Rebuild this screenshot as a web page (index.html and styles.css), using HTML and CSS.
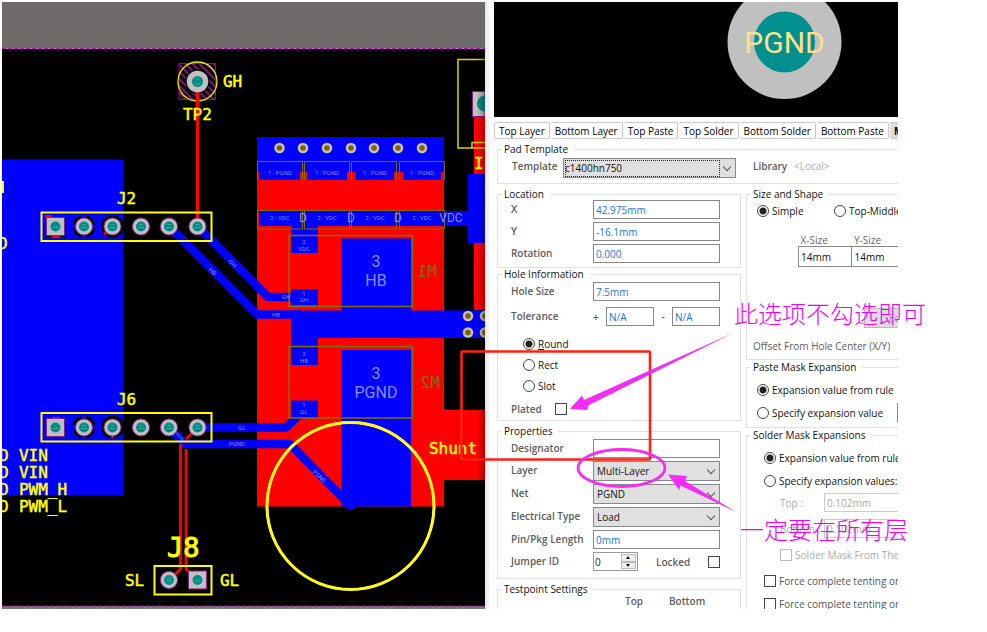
FILE: index.html
```html
<!DOCTYPE html>
<html lang="zh-CN">
<head>
<meta charset="utf-8">
<title>Pad properties</title>
<link rel="stylesheet" href="styles.css">
</head>
<body>
<main class="stage">
  <svg class="board" viewBox="2 2 483 607" role="img" aria-label="PCB layout">
    <defs>
      <g id="via"><circle r="5.3" fill="#c4c4b4"/><circle r="2.8" fill="#806000"/></g>
      <g id="pad"><circle r="8.6" fill="#c0c0c0" stroke="#8a1c8a"/><circle r="5" fill="#008c8c"/><path d="M-2 -2h4M-3 1h6" stroke="#4aa78c" stroke-width="1"/></g>
      <g id="sqpad"><path d="M-9-9H9V9H-9Z" fill="#c0c0c0" stroke="#8a1c8a"/><circle r="5" fill="#008c8c"/><path d="M-3 1h6" stroke="#4aa78c"/></g>
      <pattern id="hatch" width="5" height="5" patternUnits="userSpaceOnUse" patternTransform="rotate(-45)"><path d="M1 0V5" stroke="#b01cb0" stroke-width="1.400"/></pattern>
      <linearGradient id="shade"><stop offset="0" stop-color="#000" stop-opacity="0"/><stop offset="1" stop-color="#000" stop-opacity=".3"/></linearGradient>
    </defs>
    <path d="M2 2H485V609H2Z"/>
    <path d="M2 2H485V48H2Z" fill="#6e6a69"/>
    <path d="M2 48.5H485" stroke="#a0a0a0"/>
    <path d="M2 48.5H485" stroke="#d000d0" stroke-dasharray="4 2"/>
    <path d="M2 607.5H485" stroke="#777" stroke-width="3"/>
    <path d="M2 606H485" stroke="#b000b0" stroke-dasharray="4 2"/>
    <path d="M2 159.500H123V495H2Z" fill="#00f"/>

    <path d="M257 161H444V410H485V480H444V506.500H257ZM474 116H485V310H474Z" fill="#f00"/>
    <g fill="#00f">
      <path d="M257 137H444V172H257Z"/>
      <path d="M259 172H300V180H259ZM307 172H347V180H307ZM355 172H394V180H355ZM403 172H441V180H403Z"/>
      <path d="M259 211H469V226H259ZM468 174H485V243H468ZM291 226H318V253H291Z"/>
      <path d="M341.500 238.500H411V311H341.500ZM291 289H318V305H291ZM291 310.500H485V338H318V365H291ZM341.500 350H411V506.500H341.500ZM291 400.500H318V417H291Z"/>
    </g>
    <g fill="none" stroke="#00f" stroke-width="8.500" stroke-linejoin="round" stroke-linecap="round">
      <path d="M169 226.500L257 314.500H300M198 226.500L268 297H294M198 427.500H286L299 415M169 427L185 444H290L351 506"/>
    </g>
    <g fill="none" stroke="#806f00">
      <path d="M257.500 180V161.500H302.500V180M304.500 180V161.500H349.500V180M351.500 180V161.500H396.500V180M399.500 180V161.500H444.500V180"/>
      <path d="M257.500 210.500H302.500V229H257.500ZM304.500 210.500H349.500V229H304.500ZM351.500 210.500H396.500V229H351.500ZM399.500 210.500H444.500V229H399.500Z"/>
      <path d="M289 235.500H412.500V306.500H289ZM289 346.500H412.500V418H289Z" stroke-width="1.500"/>
    </g>
    <g class="net tiny">
      <text x="280" y="175">1 : PGND</text><text x="327" y="175">1 : PGND</text><text x="375" y="175">1 : PGND</text><text x="422" y="175">1 : PGND</text>
      <text x="280" y="220">2 : VDC</text><text x="327" y="220">2 : VDC</text><text x="375" y="220">2 : VDC</text><text x="422" y="220">2 : VDC</text>
      <text x="304" y="244">2</text><text x="304" y="251">VDC</text>
      <text x="304" y="296">1</text><text x="304" y="302">GH</text>
      <text x="304" y="356">2</text><text x="304" y="363">HB</text>
      <text x="304" y="407">1</text><text x="304" y="414">GL</text>
      <text x="286" y="299">GH</text><text x="276" y="317">HB</text><text x="242" y="430">GL</text><text x="237" y="446">PGND</text>
      <text transform="translate(318 478) rotate(45)">PGND</text><text transform="translate(211 273) rotate(45)">HB</text><text transform="translate(231 265) rotate(45)">GH</text>
    </g>
    <g class="net mid"><text x="303" y="222">D</text><text x="351" y="222">D</text><text x="398" y="222">D</text><text x="451" y="222">VDC</text></g>
    <g class="net big"><text x="376" y="267">3</text><text x="376" y="286">HB</text><text x="376" y="379">3</text><text x="376" y="398">PGND</text></g>
    <g class="mirror"><text transform="translate(437 277) scale(-1 1)">M1</text><text transform="translate(440 388) scale(-1 1)">M2</text></g>
    <g>
      <use href="#via" x="279.500" y="148"/><use href="#via" x="303" y="148"/><use href="#via" x="327" y="148"/><use href="#via" x="351" y="148"/><use href="#via" x="374" y="148"/><use href="#via" x="398" y="148"/><use href="#via" x="422" y="148"/>
      <use href="#via" x="468" y="316"/><use href="#via" x="485" y="316"/><use href="#via" x="468" y="332.500"/><use href="#via" x="485" y="332.500"/>
    </g>

    <g fill="none" stroke="#f00" stroke-width="3">
      <path d="M180.500 443V569L169 580M198 427L186 439M186 449V569L197 580" stroke-width="2.800"/>
    </g>
    <path d="M169 427L183 442" stroke="#00f" stroke-width="8"/>
    <path d="M174 430L183 440" stroke="#5c5cff" stroke-width="3" stroke-dasharray="1 1"/>
    <path d="M179 63.500H215.500V99.500H179Z" fill="url(#hatch)" stroke="#a000a0"/>
    <circle cx="197.500" cy="81.500" r="12" fill="#000"/>
    <circle cx="197.500" cy="81.500" r="19.500" fill="none" stroke="#e8e800" stroke-width="1.300"/>
    <path d="M197.500 82V220" stroke="#f00" stroke-width="3.500"/>
    <circle cx="197.500" cy="81.500" r="10.800" fill="#c0c0c0"/><circle cx="197.500" cy="81.500" r="5.500" fill="#008c8c"/><path d="M195.500 79h4M195 84h5" stroke="#4aa78c"/>

    <g>
      <path d="M46 217H66V237H46ZM46 417H66V437H46Z"/>
      <path d="M44 215H51L54 220L48 223ZM52 235H60V238H52ZM52 417H60V420H52Z" fill="#f00"/>
      <circle cx="84" cy="226.500" r="11.500"/><circle cx="112.500" cy="226.500" r="11.500"/>
      <circle cx="84" cy="427" r="11.500"/><circle cx="112.500" cy="427" r="11.500"/>
      <path d="M84 214V239M72 226.500H96M84 415V439M72 427H96" stroke="#00f" stroke-width="4"/>
      <path d="M104 234L108 231M112.500 435V438" stroke="#f00" stroke-width="3"/>
      <use href="#sqpad" x="55.500" y="226.500"/><use href="#pad" x="84" y="226.500"/><use href="#pad" x="112.500" y="226.500"/><use href="#pad" x="141" y="226.500"/><use href="#pad" x="169" y="226.500"/><use href="#pad" x="197.500" y="226.500"/>
      <use href="#sqpad" x="55.500" y="427.500"/><use href="#pad" x="84" y="427.500"/><use href="#pad" x="112.500" y="427.500"/><use href="#pad" x="141" y="427.500"/><use href="#pad" x="169" y="427.500"/><use href="#pad" x="197.500" y="427.500"/>
      <use href="#pad" x="169" y="580"/><use href="#sqpad" x="197.500" y="580"/>
    </g>
    <g fill="none" stroke="#ff0" stroke-width="2">
      <path d="M41.500 212.500H211.500V241H41.500ZM41.500 413H211.500V441.500H41.500ZM154.500 566H211.500V594.500H154.500Z"/>
      <path d="M486 59.500H458V148H486M472 148V142.500H486" stroke-width="1.500" stroke="#d8d800"/>
      <circle cx="350.500" cy="506" r="83.500" stroke="#fff080" stroke-width="3"/>
      <circle cx="350.500" cy="506" r="83.500" stroke-width="2.300"/>
    </g>
    <path d="M472.500 91.500H485V116.500H472.500Z" fill="#c0c0c0" stroke="#8a1c8a"/><circle cx="485" cy="103.500" r="8" fill="#008c8c"/>
    <g class="silk">
      <text x="223" y="87">GH</text><text x="183" y="120">TP2</text><text x="117" y="204">J2</text><text x="117" y="405">J6</text>
      <text x="19" y="461">VIN</text><text x="19" y="478">VIN</text><text x="19" y="495">PWM_H</text><text x="19" y="512">PWM_L</text>
      <text x="-1" y="461">D</text><text x="-1" y="478">D</text><text x="-1" y="495">D</text><text x="-1" y="512">D</text><text x="-2" y="249">D</text>
      <path d="M2 181H4V193H2Z"/>
      <text x="125" y="586">SL</text><text x="220" y="586">GL</text><text x="429" y="454">Shunt</text><text x="474" y="169">I</text>
      <text class="silk-large" x="167" y="557">J8</text>
    </g>
    <path d="M477 49H485V606H477Z" fill="url(#shade)"/>
  </svg>

  <section class="panel" aria-label="Pad">
    <svg class="preview" viewBox="494 2 404 115" preserveAspectRatio="xMidYMid slice" role="img" aria-label="Pad preview">
      <circle cx="784.500" cy="42" r="57" fill="#c0c0c0"/><circle cx="784.500" cy="42" r="30.500" fill="#009090"/>
      <text x="784.500" y="53" text-anchor="middle">PGND</text>
    </svg>
    <nav class="tabs">
      <button type="button">Top Layer</button><button type="button">Bottom Layer</button><button type="button">Top Paste</button><button type="button">Top Solder</button><button type="button">Bottom Solder</button><button type="button">Bottom Paste</button><button type="button" class="active">Multi-Layer</button>
    </nav>
    <form class="form">
      <fieldset class="group template open">
        <legend>Pad Template</legend>
        <label for="tpl">Template</label>
        <span class="select focus"><select id="tpl"><option>c1400hn750</option></select></span>
        <span class="library">Library</span><span class="faint">&lt;Local&gt;</span>
      </fieldset>
      <div class="columns">
        <div class="column">
          <fieldset class="group location">
            <legend>Location</legend>
            <div class="row"><label for="px">X</label><input id="px" value="42.975mm"></div>
            <div class="row"><label for="py">Y</label><input id="py" value="-16.1mm"></div>
            <div class="row"><label for="rot">Rotation</label><input id="rot" value="0.000"></div>
          </fieldset>
          <fieldset class="group hole">
            <legend>Hole Information</legend>
            <div class="row"><label for="hs">Hole Size</label><input id="hs" value="7.5mm"></div>
            <div class="row"><label for="tp">Tolerance</label><div class="pair"><span>+</span><input id="tp" value="N/A"><span>-</span><input aria-label="Minus tolerance" value="N/A"></div></div>
            <div class="radios">
              <label><input type="radio" name="shape" checked><span><u>R</u>ound</span></label>
              <label><input type="radio" name="shape"><span>Rect</span></label>
              <label><input type="radio" name="shape"><span>Slot</span></label>
            </div>
            <div class="plated"><label for="plated">Plated</label><input type="checkbox" id="plated"></div>
          </fieldset>
          <fieldset class="group properties">
            <legend>Properties</legend>
            <div class="row"><label for="des">Designator</label><input id="des" value=""></div>
            <div class="row"><label for="lay">Layer</label><span class="select"><select id="lay"><option>Multi-Layer</option></select></span></div>
            <div class="row"><label for="net">Net</label><span class="select"><select id="net"><option>PGND</option></select></span></div>
            <div class="row"><label for="et">Electrical Type</label><span class="select"><select id="et"><option>Load</option></select></span></div>
            <div class="row"><label for="len">Pin/Pkg Length</label><input id="len" value="0mm"></div>
            <div class="row"><label for="jid">Jumper ID</label>
              <div class="jumper">
                <span class="spinner"><input id="jid" value="0"><span class="steps"><button type="button" aria-label="Increase"></button><button type="button" class="down" aria-label="Decrease"></button></span></span>
                <label for="lock">Locked</label><input type="checkbox" id="lock">
              </div>
            </div>
          </fieldset>
          <fieldset class="group testpoint">
            <legend>Testpoint Settings</legend>
            <div class="heads"><span>Top</span><span>Bottom</span></div>
          </fieldset>
        </div>
        <div class="column">
          <fieldset class="group open size">
            <legend>Size and Shape</legend>
            <div class="modes">
              <label><input type="radio" name="mode" checked><span>Simple</span></label>
              <label><input type="radio" name="mode"><span>Top-Middle-Bottom</span></label>
            </div>
            <table class="sizes">
              <thead><tr><th>X-Size</th><th>Y-Size</th></tr></thead>
              <tbody><tr><td>14mm</td><td>14mm</td></tr></tbody>
            </table>
            <button type="button" class="edit" disabled>Edit</button>
            <p class="offset">Offset From Hole Center (X/Y)</p>
          </fieldset>
          <fieldset class="group open paste">
            <legend>Paste Mask Expansion</legend>
            <label><input type="radio" name="paste" checked><span>Expansion value from rule</span></label>
            <div class="specify"><label><input type="radio" name="paste"><span>Specify expansion value</span></label><input class="amount" aria-label="Paste expansion"></div>
          </fieldset>
          <fieldset class="group open solder">
            <legend>Solder Mask Expansions</legend>
            <label><input type="radio" name="solder" checked><span>Expansion value from rule</span></label>
            <label><input type="radio" name="solder"><span>Specify expansion values:</span></label>
            <div class="value"><label for="st">Top :</label><input id="st" value="0.102mm" disabled></div>
            <div class="value"><label for="sb">Bottom :</label><input id="sb" value="0.102mm" disabled></div>
            <label class="from-hole"><input type="checkbox" disabled><span>Solder Mask From The Hole Edge</span></label>
            <label class="tent"><input type="checkbox"><span>Force complete tenting on top</span></label>
            <label class="tent"><input type="checkbox"><span>Force complete tenting on bottom</span></label>
          </fieldset>
        </div>
      </div>
    </form>
  </section>

  <svg class="notes" viewBox="0 0 987 632">
    <rect x="461.500" y="351.500" width="188.500" height="108" rx="1" fill="none" stroke="#ff2010" stroke-width="2.600"/>
    <path d="M570 409L582 395.500L584 400L733 333L588 405.500L587.500 410ZM668 474.500L687 476L685 481L736 512L680.500 485.500L679 490Z" fill="#f52cf5"/>
    <ellipse cx="621.500" cy="468" rx="43.500" ry="18.500" fill="none" stroke="#f52cf5" stroke-width="2.800"/>
    <text x="734" y="323">此选项不勾选即可</text>
    <text x="740" y="539">一定要在所有层</text>
  </svg>
</main>
</body>
</html>
```
FILE: styles.css
```css
* { box-sizing: border-box; }
body { margin: 0; background: #fff; font: 500 10px/12px "Open Sans", "Noto Sans", sans-serif; color: #111; }
.stage { position: relative; display: grid; grid-template-columns: minmax(0, 483fr) minmax(0, 413fr); padding: 2px 9.02% 0 2px; }
.board { display: block; width: 100%; height: auto; }
.board text { font-family: Roboto, sans-serif; font-weight: 400; }
.net { fill: #8c8cff; text-anchor: middle; }
.tiny { font-size: 6px; }
.mid { font-size: 12px; }
.big { font-size: 16px; }
.board .silk text { font-family: "DejaVu Sans Mono", monospace; font-size: 16px; stroke: #ff0; stroke-width: 0.5px; }
.board .silk .silk-large { font-size: 27px; stroke-width: 1px; }
.silk { fill: #ff0; }
.mirror { fill: #80700c; font-size: 16px; }
.board .mirror text { font-family: "DejaVu Sans Mono", monospace; }
.notes { position: absolute; top: 0; left: 0; width: 100%; pointer-events: none; }
.notes text { font: 300 24px "Noto Sans CJK SC", sans-serif; fill: #f500f5; }

.panel { height: 0; min-height: 100%; overflow: hidden; padding-left: 9px; background: linear-gradient(90deg, #e4e4e4, #f0f0f0 2px, #f0f0f0 4px, #fff 4px); }
.preview { display: block; width: 100%; height: 115px; background: #000; }
.preview text { font: 400 30px Roboto, sans-serif; fill: #ffe08a; }
.tabs { display: flex; gap: 1px; margin-top: 5px; white-space: nowrap; }
.tabs button { flex: none; height: 17px; padding: 0 4px; border: 1px solid #c8c8c8; border-left-width: 0; border-radius: 2px; background: #fff; font: inherit; color: #000; }
.tabs button:first-child { border-left-width: 1px; }
.tabs .active { background: #ddd; font-weight: 700; }

.form { margin: 4px 0 0 3px; white-space: nowrap; }
.group { min-width: 0; margin: 0; padding: 0 20px 4px 13px; border: 1px solid #e0e0e0; }
.open { padding-left: 6px; padding-right: 0; border-right: 0; }
.group legend { margin-left: -10px; padding: 0 6px 0 3px; line-height: 12px; }
.group.open > legend { margin-left: -3px; }
label, .library, .pair, .heads, .offset { color: #5c5c5c; font-weight: 600; }
input, select { width: 100%; min-width: 0; margin: 0; border: 1px solid #888; border-radius: 0; font: inherit; font-weight: 500; }
input { height: 19px; padding: 0 2px; background: #fff; color: #1a73d9; }
.select { position: relative; display: block; }
.select::after { content: ""; position: absolute; right: 6px; top: 6px; width: 5px; height: 5px; border: solid #555; border-width: 0 1px 1px 0; transform: rotate(45deg); }
select { display: block; height: 20px; padding: 0 3px; appearance: none; background: #e0e0e0; color: #111; }
input[type="radio"], input[type="checkbox"] { flex: none; appearance: none; width: 12px; height: 12px; padding: 0; border: 1px solid #444; }
input[type="radio"] { border-radius: 50%; }
input[type="radio"]:checked { background: radial-gradient(circle, #222 3px, #fff 4px); }

.template { display: flex; height: 41px; padding: 3px 0 4px 14px; }
.group.template > legend { margin-left: -11px; }
.template label { width: 51px; padding-top: 2px; }
.template .select { width: 173px; margin-right: 17px; }
.template select { padding: 0 1px; }
.focus::before { content: ""; position: absolute; inset: 2px 16px 2px 2px; border: 1px dotted #222; }
.library { width: 41px; padding-top: 2px; }
.faint { color: #aaa; padding-top: 2px; }
.columns { display: grid; grid-template-columns: 244px minmax(0, 1fr); column-gap: 5px; margin-top: 4px; }
.row { display: grid; grid-template-columns: 82px minmax(0, 1fr); align-items: center; }
.row > label { padding-bottom: 2px; }
.location .row + .row, .properties .row + .row { margin-top: 3px; }
.hole { padding-top: 2px; padding-bottom: 2px; }
.hole .row + .row { margin-top: 6px; }
.pair { display: grid; grid-template-columns: 13px 1fr 18px 1fr; align-items: center; }
.pair input + span { text-align: center; }
.radios { display: grid; grid-auto-rows: 21px; margin-top: 7px; padding-left: 12px; }
.radios label, .modes label, .paste label, .solder > label { display: flex; align-items: center; gap: 3px; color: #111; font-weight: 500; }
.plated { display: flex; align-items: center; height: 22px; padding-top: 4px; }
.plated label { width: 44px; }
.properties { margin-top: 4px; padding-top: 2px; padding-bottom: 7px; }
.jumper { display: flex; align-items: center; }
.jumper label { margin: 0 auto 0 18px; }
.spinner { display: flex; width: 45px; border: 1px solid #999; padding: 1px; height: 19px; }
.spinner input { flex: 1; height: 15px; padding: 0; border: 0; color: #222; }
.steps { display: grid; width: 15px; }
.steps button { display: grid; place-items: center; padding: 0; border: 1px solid #bbb; background: #eee; }
.steps button::before { content: ""; border: 2px solid transparent; border-top-width: 0; border-bottom: 3px solid #111; }
.steps .down::before { transform: rotate(180deg); }
.testpoint { margin-top: 4px; height: 80px; }
.heads { display: flex; gap: 26px; padding-left: 114px; }

.size { height: 172px; }
.modes { display: grid; grid-template-columns: 77px 1fr; height: 22px; padding-left: 4px; }
.sizes { width: 108px; margin: 12px 0 0 45px; border-collapse: collapse; table-layout: fixed; }
.sizes th { padding: 0 2px; text-align: left; color: #666; font-weight: 500; }
.sizes td { height: 20px; padding: 0 2px; border: 1px solid #888; font-weight: 500; }
.edit { display: block; width: 80px; height: 20px; margin: 41px 0 0 111px; padding: 0 24px; border: 1px solid #bbb; background: #ddd; color: #999; font: inherit; text-align: left; }
.offset { margin: 12px 0 0; font-weight: 500; }
.paste { height: 67px; margin-top: 1px; padding-left: 10px; }
.group.paste > legend { margin-left: -7px; }
.paste > label { height: 34px; }
.specify { display: flex; align-items: center; margin-top: -4px; }
.specify label { flex: none; width: 140px; }
.specify .amount { flex: none; width: 60px; }
.solder { height: 220px; margin-top: 1px; padding-left: 17px; padding-top: 5px; }
.group.solder > legend { margin-left: -14px; }
.solder > label { height: 23px; }
.value { display: grid; grid-template-columns: 44px 120px; align-items: center; margin: 1px 0 7px 16px; }
.value label, .value input, .solder .from-hole { color: #aaa; font-weight: 500; }
.value input { border-color: #ccc; }
.solder .from-hole { height: 19px; margin-bottom: 5px; padding-left: 16px; }
.from-hole input[type="checkbox"] { border-color: #bbb; }
.solder .tent { color: #555; }
```
